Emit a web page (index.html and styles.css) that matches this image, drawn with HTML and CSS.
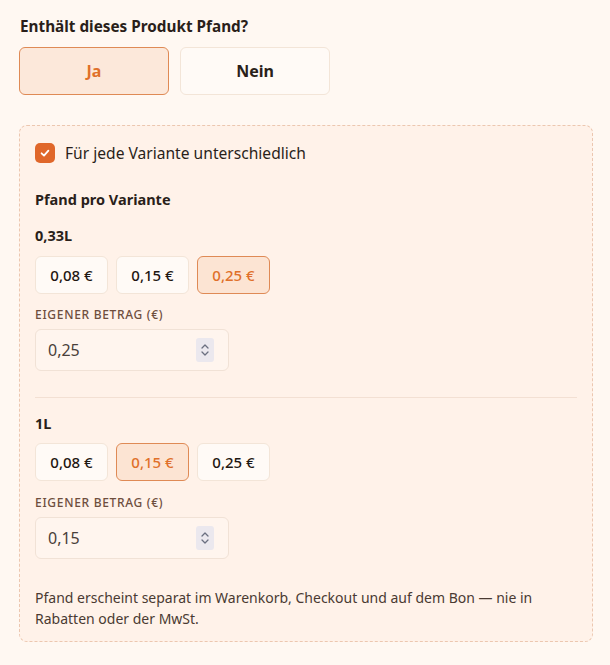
FILE: index.html
```html
<!DOCTYPE html>
<html lang="de">
<head>
<meta charset="utf-8">
<link rel="stylesheet" href="styles.css">
</head>
<body>
<div class="page">
  <h2 class="question">Enthält dieses Produkt Pfand?</h2>
  <div class="yesno">
    <button class="choice active">Ja</button>
    <button class="choice">Nein</button>
  </div>

  <div class="panel">
    <label class="check">
      <span class="box">
        <svg width="12" height="12" viewBox="0 0 12 12"><path d="M2.6 6.3 L5 8.6 L9.4 3.6" fill="none" stroke="#fff" stroke-width="1.8" stroke-linecap="round" stroke-linejoin="round"/></svg>
      </span>
      <span class="check-text">Für jede Variante unterschiedlich</span>
    </label>

    <div class="sub-title">Pfand pro Variante</div>

    <div class="variant">
      <div class="variant-name">0,33L</div>
      <div class="chips">
        <button class="chip">0,08 €</button>
        <button class="chip">0,15 €</button>
        <button class="chip active">0,25 €</button>
      </div>
      <div class="field-label">EIGENER BETRAG (€)</div>
      <div class="field">
        <input class="field-input" type="text" value="0,25">
        <span class="spin">
          <svg width="10" height="16" viewBox="0 0 10 16"><path d="M2 6 L5 3 L8 6 M2 10 L5 13 L8 10" fill="none" stroke="#6b6f80" stroke-width="1.3" stroke-linecap="round" stroke-linejoin="round"/></svg>
        </span>
      </div>
    </div>

    <div class="divider"></div>

    <div class="variant">
      <div class="variant-name">1L</div>
      <div class="chips">
        <button class="chip">0,08 €</button>
        <button class="chip active">0,15 €</button>
        <button class="chip">0,25 €</button>
      </div>
      <div class="field-label">EIGENER BETRAG (€)</div>
      <div class="field">
        <input class="field-input" type="text" value="0,15">
        <span class="spin">
          <svg width="10" height="16" viewBox="0 0 10 16"><path d="M2 6 L5 3 L8 6 M2 10 L5 13 L8 10" fill="none" stroke="#6b6f80" stroke-width="1.3" stroke-linecap="round" stroke-linejoin="round"/></svg>
        </span>
      </div>
    </div>

    <p class="note">Pfand erscheint separat im Warenkorb, Checkout und auf dem Bon — nie in Rabatten oder der MwSt.</p>
  </div>
</div>
</body>
</html>
```

FILE: styles.css
```css
* { box-sizing: border-box; }
html, body { margin: 0; padding: 0; }
body {
  background: #fff8f2;
  font-family: "Noto Sans", "Open Sans", sans-serif;
  color: #2a1f1a;
  width: 610px;
  height: 665px;
  overflow: hidden;
}
.page {
  padding: 16px 17px 0 19px;
}
.question {
  margin: 0 0 11px 1px;
  font-size: 15.3px;
  font-weight: 700;
  line-height: 20px;
  color: #2a1f1a;
}
.yesno {
  display: flex;
  gap: 11px;
}
.choice {
  width: 150px;
  height: 48px;
  border-radius: 6px;
  border: 1px solid #f3e5d8;
  background: #fffaf6;
  font-family: inherit;
  font-size: 16px;
  font-weight: 700;
  color: #2a1f1a;
  padding: 0;
}
.choice.active {
  background: #fce8da;
  border-color: #df8a55;
  color: #e0702a;
}
.panel {
  margin-top: 30px;
  width: 574px;
  height: 517px;
  border: 1px dashed #ecc7b0;
  border-radius: 8px;
  background: #fff2e9;
  padding: 16px 15px 0 15px;
}
.check {
  display: flex;
  align-items: center;
  gap: 10px;
  height: 22px;
}
.box {
  width: 20px;
  height: 20px;
  border-radius: 5px;
  background: #e0672a;
  display: flex;
  align-items: center;
  justify-content: center;
}
.check-text {
  font-size: 15.6px;
  color: #2a1f1a;
}
.sub-title {
  margin-top: 25px;
  font-size: 14.5px;
  font-weight: 700;
  line-height: 20px;
}
.variant-name {
  margin-top: 16px;
  font-size: 14.5px;
  font-weight: 700;
  line-height: 20px;
}
.chips {
  display: flex;
  gap: 8px;
  margin-top: 11px;
}
.chip {
  width: 73px;
  height: 38px;
  border-radius: 6px;
  border: 1px solid #f3e5d8;
  background: #fffaf6;
  font-family: inherit;
  font-size: 15px;
  font-weight: 500;
  color: #1f1712;
  padding: 0;
}
.chip.active {
  background: #fce4d3;
  border-color: #df8a55;
  color: #e0702a;
}
.field-label {
  margin-top: 12px;
  font-size: 12px;
  font-weight: 500;
  letter-spacing: 0.7px;
  color: #6e4e3e;
  line-height: 17px;
}
.field {
  margin-top: 6px;
  width: 194px;
  height: 42px;
  border: 1px solid #f1e2d6;
  border-radius: 6px;
  background: #fff5ee;
  display: flex;
  align-items: center;
  padding: 0 14px 0 12px;
}
.field-input {
  flex: 1;
  min-width: 0;
  border: none;
  background: transparent;
  font-family: inherit;
  font-size: 16px;
  color: #4a3f3a;
  padding: 0;
  outline: none;
}
.spin {
  width: 18px;
  height: 24px;
  background: #ebe8ee;
  border-radius: 3px;
  display: flex;
  align-items: center;
  justify-content: center;
}
.divider {
  margin-top: 26px;
  height: 1px;
  background: #f3e0d3;
}
.divider + .variant .variant-name { margin-top: 15px; }
.divider + .variant .chips { margin-top: 10px; }
.divider + .variant .field-label { margin-top: 13px; }
.note {
  margin: 28px 0 0 0;
  font-size: 14px;
  line-height: 21px;
  color: #4a3a32;
}
```
